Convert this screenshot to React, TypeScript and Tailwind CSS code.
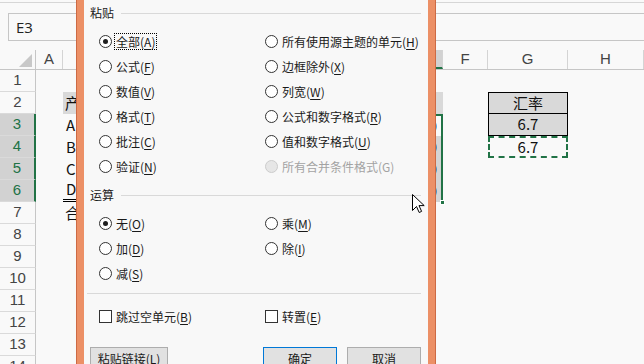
import type { ReactNode } from "react";

type Opt = { text: string; key: string; checked?: boolean; disabled?: boolean; focus?: boolean };

const pasteRows: [Opt, Opt][] = [
  [{ text: "全部", key: "A", checked: true, focus: true }, { text: "所有使用源主题的单元", key: "H" }],
  [{ text: "公式", key: "F" }, { text: "边框除外", key: "X" }],
  [{ text: "数值", key: "V" }, { text: "列宽", key: "W" }],
  [{ text: "格式", key: "T" }, { text: "公式和数字格式", key: "R" }],
  [{ text: "批注", key: "C" }, { text: "值和数字格式", key: "U" }],
  [{ text: "验证", key: "N" }, { text: "所有合并条件格式", key: "G", disabled: true }],
];

const opRows: [Opt, Opt | null][] = [
  [{ text: "无", key: "O", checked: true }, { text: "乘", key: "M" }],
  [{ text: "加", key: "D" }, { text: "除", key: "I" }],
  [{ text: "减", key: "S" }, null],
];

const colWidths = ["w-[27px]", "w-[137px]", "w-[100px]", "w-[80px]", "w-[63px]", "w-[45px]", "w-[80px]", "flex-1"];
const colNames = ["A", "B", "C", "D", "E", "F", "G", "H"];
const selectedRows = [3, 4, 5, 6];

function Label({ opt }: { opt: Opt }) {
  return (
    <span
      className={
        "ml-[2px] border px-[1px] leading-[15px] " +
        (opt.focus ? "border-dotted border-black" : "border-transparent") +
        (opt.disabled ? " text-[#a3a3a3]" : "")
      }
    >
      {opt.text}(
      {opt.disabled ? opt.key : <span className="underline underline-offset-2">{opt.key}</span>})
    </span>
  );
}

function Radio({ opt }: { opt: Opt }) {
  return (
    <div className="flex h-[25px] items-center">
      <span
        className={
          "flex size-[13px] items-center justify-center rounded-full border " +
          (opt.disabled ? "border-[#cccccc] bg-[#e6e6e6]" : "border-[#333333] bg-white")
        }
      >
        {opt.checked && <span className="size-[5px] rounded-full bg-[#1f1f1f]" />}
      </span>
      <Label opt={opt} />
    </div>
  );
}

function Check({ opt }: { opt: Opt }) {
  return (
    <div className="flex h-[25px] items-center">
      <span className="size-[13px] border border-[#333333] bg-white" />
      <Label opt={opt} />
    </div>
  );
}

function Section({ title }: { title: string }) {
  return (
    <div className="flex h-[26px] items-center pl-[6px] pr-[7px]">
      <span>{title}</span>
      <span className="ml-[7px] h-px flex-1 bg-[#d9d9d9]" />
    </div>
  );
}

function Button({ children, primary, width }: { children: ReactNode; primary?: boolean; width: string }) {
  return (
    <div
      className={
        "flex h-[23px] items-center justify-center border bg-[#e1e1e1] " +
        width +
        (primary ? " border-[#0078d7]" : " border-[#adadad]")
      }
    >
      {children}
    </div>
  );
}

function cellFor(row: number, col: string): { text?: string; cls: string } {
  if (col === "B") {
    if (row === 2) return { text: "产品", cls: "bg-[#d9d9d9] pl-[2px]" };
    if (row >= 3 && row <= 6) {
      const t = ["A", "B", "C", "D"][row - 3];
      return { text: t, cls: "pl-[3px]" + (row === 6 ? " border-b-[3px] border-double border-black" : "") };
    }
    if (row === 7) return { text: "合计", cls: "pl-[2px]" };
  }
  if (col === "E") {
    if (row === 2) return { cls: "bg-[#d9d9d9]" };
    if (row === 3) return { text: "0", cls: "justify-end pr-[4px] border-t-2 border-r-2 border-[#217346]" };
    if (row >= 4 && row <= 6) return { text: "0", cls: "justify-end pr-[4px] bg-[#d4d4d4] border-r-2 border-[#217346]" };
  }
  if (col === "G") {
    if (row === 2) return { text: "汇率", cls: "justify-center bg-[#d9d9d9] border border-black" };
    if (row === 3) return { text: "6.7", cls: "justify-center bg-[#d9d9d9] border-x border-b border-black" };
    if (row === 4) return { text: "6.7", cls: "justify-center border-2 border-dashed border-[#217346]" };
  }
  return { cls: "" };
}

function Sheet() {
  const rows = Array.from({ length: 14 }, (_, i) => i + 1);
  return (
    <div className="bg-[#f9f9f9] font-['Liberation_Sans',sans-serif] text-[#444444]">
      <div className="h-[3px] border-b border-[#d6d6d6]" />
      <div className="h-[10px]" />
      <div className="flex h-[28px] pl-[8px]">
        <div className="flex w-[110px] items-center border border-[#c6c6c6] pl-[7px] font-['Open_Sans',sans-serif] text-[15px] text-[#222222]">
          E3
        </div>
        <div className="flex-1 border-y border-[#c6c6c6]" />
      </div>
      <div className="h-[9px]" />
      <div className="flex h-[20px] border-b border-[#c6c6c6] text-[15px]">
        <div className="flex w-[36px] items-end justify-end border-r border-[#c6c6c6] pb-[2px] pr-[3px]">
          <svg width="13" height="13" viewBox="0 0 13 13">
            <polygon points="0,13 13,13 13,0" fill="#c8c8c8" />
          </svg>
        </div>
        {colNames.map((c, i) => (
          <div
            key={c}
            className={
              "flex items-center justify-center border-r border-[#d4d4d4] " +
              colWidths[i] +
              (c === "E" ? " border-b-2 border-b-[#217346] bg-[#d2d2d2] text-[#217346]" : "")
            }
          >
            {c}
          </div>
        ))}
      </div>
      {rows.map((r) => {
        const sel = selectedRows.includes(r);
        return (
          <div key={r} className="flex h-[22px]">
            <div
              className={
                "flex w-[36px] items-center justify-center border-b border-[#dadada] text-[15px] " +
                (sel ? "border-r-2 border-r-[#217346] bg-[#d2d2d2] text-[#217346]" : "border-r border-r-[#c6c6c6]")
              }
            >
              {r}
            </div>
            {colNames.map((c, i) => {
              const cell = cellFor(r, c);
              return (
                <div
                  key={c}
                  className={
                    "relative flex items-center overflow-hidden whitespace-nowrap font-['Noto_Sans_CJK_SC',sans-serif] text-[15px] text-[#111111] " +
                    colWidths[i] +
                    " " +
                    cell.cls
                  }
                >
                  {cell.text}
                </div>
              );
            })}
          </div>
        );
      })}
    </div>
  );
}

function Dialog() {
  return (
    <div className="absolute left-[76px] top-0 h-[390px] w-[360px] border-x border-[#cd6a44]">
      <div className="h-full border-x-[7px] border-[#ec9066] bg-[#f8f8f8] font-['Noto_Sans_CJK_SC',sans-serif] text-[12px] text-[#1a1a1a]">
        <Section title="粘贴" />
        <div className="mt-[3px] grid grid-cols-[166px_1fr] pl-[15px]">
          {pasteRows.map(([l, r]) => (
            <div key={l.key} className="contents">
              <Radio opt={l} />
              <Radio opt={r} />
            </div>
          ))}
        </div>
        <div className="mt-[3px]">
          <Section title="运算" />
        </div>
        <div className="mt-[3px] grid grid-cols-[166px_1fr] pl-[15px]">
          {opRows.map(([l, r]) => (
            <div key={l.key} className="contents">
              <Radio opt={l} />
              {r ? <Radio opt={r} /> : <div />}
            </div>
          ))}
        </div>
        <div className="ml-[3px] mr-[7px] mt-[7px] h-px bg-[#d9d9d9]" />
        <div className="mt-[10px] grid grid-cols-[166px_1fr] pl-[15px]">
          <Check opt={{ text: "跳过空单元", key: "B" }} />
          <Check opt={{ text: "转置", key: "E" }} />
        </div>
        <div className="mt-[18px] flex pl-[6px] pr-[7px]">
          <Button width="w-[78px]">
            粘贴链接(<span className="underline underline-offset-2">L</span>)
          </Button>
          <div className="ml-auto flex gap-[10px]">
            <Button width="w-[74px]" primary>
              确定
            </Button>
            <Button width="w-[74px]">取消</Button>
          </div>
        </div>
      </div>
    </div>
  );
}

export default function App() {
  return (
    <div className="relative h-[364px] w-[644px] overflow-hidden bg-[#f9f9f9]">
      <Sheet />
      {/* fill handle of the E3:E6 selection */}
      <div className="absolute left-[440px] top-[200px] size-[5px] border border-white bg-[#217346]" />
      <Dialog />
      <svg className="absolute left-[412px] top-[194px]" width="14" height="20" viewBox="0 0 14 20">
        <path d="M0.5 0.5 L0.5 16.5 L4.5 12.5 L7.2 18.5 L9.6 17.4 L7 11.6 L12.2 11.6 Z" fill="white" stroke="black" strokeWidth="1" strokeLinejoin="miter" />
      </svg>
    </div>
  );
}
